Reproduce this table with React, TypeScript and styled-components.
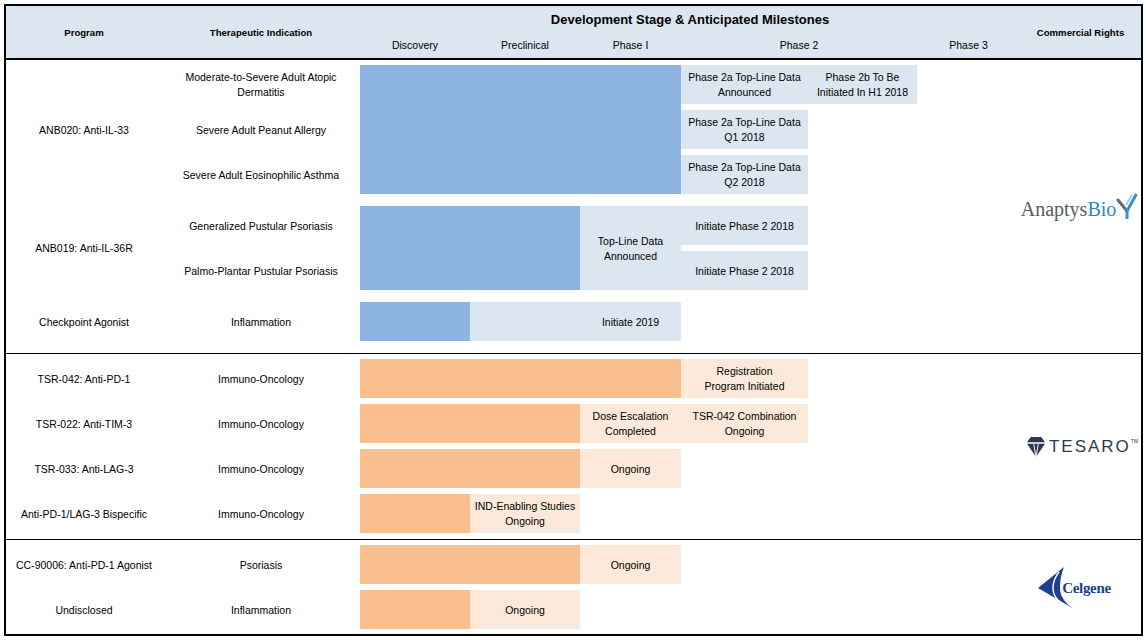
import { FC } from 'react';
import styled, { createGlobalStyle } from 'styled-components';

type Tone = 'blue' | 'orange';
type Fill = 'solid' | 'light';
type LogoKind = 'anaptys' | 'tesaro' | 'celgene';

interface Bar {
  col: string;
  row?: string;
  fill: Fill;
  text?: string;
}

interface Program {
  name: string;
  indications: string[];
  bars: Bar[];
}

interface Section {
  tone: Tone;
  logo: LogoKind;
  gap: number;
  padTop: number;
  padBottom: number;
  programs: Program[];
}

// grid columns: program | indication | discovery | preclinical | phase I | phase 2a | phase 2b | phase 3
const COLUMNS = '156px 198px 110px 110px 101px 127px 109px 103px';

const COLORS: Record<Tone, Record<Fill, string>> = {
  blue: { solid: '#8db4e2', light: '#dce6f1' },
  orange: { solid: '#fabf8f', light: '#fde9d9' },
};

const sections: Section[] = [
  {
    tone: 'blue',
    logo: 'anaptys',
    gap: 12,
    padTop: 5,
    padBottom: 12,
    programs: [
      {
        name: 'ANB020: Anti-IL-33',
        indications: [
          'Moderate-to-Severe Adult Atopic\nDermatitis',
          'Severe Adult Peanut Allergy',
          'Severe Adult Eosinophilic Asthma',
        ],
        bars: [
          { col: '3 / 6', row: '1 / 4', fill: 'solid' },
          { col: '6', row: '1', fill: 'light', text: 'Phase 2a Top-Line Data\nAnnounced' },
          { col: '7', row: '1', fill: 'light', text: 'Phase 2b To Be\nInitiated In H1 2018' },
          { col: '6', row: '2', fill: 'light', text: 'Phase 2a Top-Line Data\nQ1 2018' },
          { col: '6', row: '3', fill: 'light', text: 'Phase 2a Top-Line Data\nQ2 2018' },
        ],
      },
      {
        name: 'ANB019: Anti-IL-36R',
        indications: ['Generalized Pustular Psoriasis', 'Palmo-Plantar Pustular Psoriasis'],
        bars: [
          { col: '3 / 5', row: '1 / 3', fill: 'solid' },
          { col: '5', row: '1 / 3', fill: 'light', text: 'Top-Line Data\nAnnounced' },
          { col: '6', row: '1', fill: 'light', text: 'Initiate Phase 2 2018' },
          { col: '6', row: '2', fill: 'light', text: 'Initiate Phase 2 2018' },
        ],
      },
      {
        name: 'Checkpoint Agonist',
        indications: ['Inflammation'],
        bars: [
          { col: '3', fill: 'solid' },
          { col: '4', fill: 'light' },
          { col: '5', fill: 'light', text: 'Initiate 2019' },
        ],
      },
    ],
  },
  {
    tone: 'orange',
    logo: 'tesaro',
    gap: 6,
    padTop: 5,
    padBottom: 6,
    programs: [
      {
        name: 'TSR-042: Anti-PD-1',
        indications: ['Immuno-Oncology'],
        bars: [
          { col: '3 / 6', fill: 'solid' },
          { col: '6', fill: 'light', text: 'Registration\nProgram Initiated' },
        ],
      },
      {
        name: 'TSR-022: Anti-TIM-3',
        indications: ['Immuno-Oncology'],
        bars: [
          { col: '3 / 5', fill: 'solid' },
          { col: '5', fill: 'light', text: 'Dose Escalation\nCompleted' },
          { col: '6', fill: 'light', text: 'TSR-042 Combination\nOngoing' },
        ],
      },
      {
        name: 'TSR-033: Anti-LAG-3',
        indications: ['Immuno-Oncology'],
        bars: [
          { col: '3 / 5', fill: 'solid' },
          { col: '5', fill: 'light', text: 'Ongoing' },
        ],
      },
      {
        name: 'Anti-PD-1/LAG-3 Bispecific',
        indications: ['Immuno-Oncology'],
        bars: [
          { col: '3', fill: 'solid' },
          { col: '4', fill: 'light', text: 'IND-Enabling Studies\nOngoing' },
        ],
      },
    ],
  },
  {
    tone: 'orange',
    logo: 'celgene',
    gap: 6,
    padTop: 5,
    padBottom: 5,
    programs: [
      {
        name: 'CC-90006: Anti-PD-1 Agonist',
        indications: ['Psoriasis'],
        bars: [
          { col: '3 / 5', fill: 'solid' },
          { col: '5', fill: 'light', text: 'Ongoing' },
        ],
      },
      {
        name: 'Undisclosed',
        indications: ['Inflammation'],
        bars: [
          { col: '3', fill: 'solid' },
          { col: '4', fill: 'light', text: 'Ongoing' },
        ],
      },
    ],
  },
];

const GlobalStyle = createGlobalStyle`
  body {
    margin: 0;
    background: #fff;
    font-family: "Liberation Sans", Arial, sans-serif;
    font-size: 10.5px;
    color: #000;
  }
`;

const Frame = styled.div`
  margin: 4px 0 0 4px;
  width: 1139px;
  border: 2px solid #000;
  box-sizing: border-box;
  background: #fff;
`;

const Header = styled.div`
  display: grid;
  grid-template-columns: ${COLUMNS} 121px;
  grid-template-rows: 26px 26px;
  background: #dce6f1;
  border-bottom: 2px solid #000;
`;

const HeadCell = styled.div<{ $col: string; $row: string; $bold?: boolean; $size?: number }>`
  grid-column: ${(p) => p.$col};
  grid-row: ${(p) => p.$row};
  display: flex;
  align-items: center;
  justify-content: center;
  font-weight: ${(p) => (p.$bold ? 700 : 400)};
  font-size: ${(p) => p.$size ?? 10.5}px;
  white-space: nowrap;
`;

const SectionRow = styled.div<{ $first: boolean }>`
  display: flex;
  border-top: ${(p) => (p.$first ? 'none' : '1px solid #000')};
`;

const Programs = styled.div<{ $gap: number; $padTop: number; $padBottom: number }>`
  width: 1014px;
  display: flex;
  flex-direction: column;
  gap: ${(p) => p.$gap}px;
  padding: ${(p) => p.$padTop}px 0 ${(p) => p.$padBottom}px;
`;

const ProgramGrid = styled.div<{ $rows: number }>`
  display: grid;
  grid-template-columns: ${COLUMNS};
  grid-template-rows: repeat(${(p) => p.$rows}, 39px);
  row-gap: 6px;
`;

const TextCell = styled.div<{ $col: number; $row: string }>`
  grid-column: ${(p) => p.$col};
  grid-row: ${(p) => p.$row};
  display: flex;
  align-items: center;
  justify-content: center;
  text-align: center;
  white-space: pre-line;
  line-height: 15px;
  padding-top: 1px;
`;

const BarCell = styled.div<{ $col: string; $row: string; $color: string }>`
  grid-column: ${(p) => p.$col};
  grid-row: ${(p) => p.$row};
  background: ${(p) => p.$color};
  display: flex;
  align-items: center;
  justify-content: center;
  text-align: center;
  white-space: pre-line;
  line-height: 15px;
  padding-top: 1px;
`;

const LogoCell = styled.div`
  flex: 1;
  display: flex;
  align-items: center;
  justify-content: center;
`;

const AnaptysMark = styled.div`
  display: flex;
  align-items: flex-end;
  margin-left: -2px;
`;

const AnaptysText = styled.span`
  font-family: "Liberation Serif", "Times New Roman", serif;
  font-size: 20px;
  color: #595b5e;
  line-height: 1;
  padding-bottom: 3px;
`;

const BioText = styled.span`
  color: #3382c4;
`;

const TesaroMark = styled.div`
  display: flex;
  align-items: center;
  gap: 4px;
  color: #2d3a4e;
  margin-left: 4px;
`;

const TesaroText = styled.span`
  font-family: "Liberation Sans", Arial, sans-serif;
  font-size: 17px;
  letter-spacing: 2px;
  line-height: 1;
`;

const Trademark = styled.sup`
  font-size: 5px;
  letter-spacing: 0;
  vertical-align: 9px;
`;

const CelgeneMark = styled.div`
  display: flex;
  align-items: center;
  margin-left: -12px;
  margin-top: 2px;
`;

const CelgeneText = styled.span`
  font-family: "Liberation Serif", "Times New Roman", serif;
  font-size: 15px;
  font-weight: 700;
  color: #1d3f8e;
  margin-left: -14px;
  letter-spacing: -0.3px;
`;

const Logo: FC<{ kind: LogoKind }> = ({ kind }) => {
  if (kind === 'anaptys') {
    return (
      <AnaptysMark>
        <AnaptysText>
          Anaptys<BioText>Bio</BioText>
        </AnaptysText>
        <svg width="22" height="30" viewBox="0 0 22 30">
          <path d="M2 8 L11 19" stroke="#5d6d78" strokeWidth="3" strokeLinecap="round" fill="none" />
          <path d="M20.5 2 L11 19 L11 27" stroke="#3a8fcb" strokeWidth="3" strokeLinejoin="round" fill="none" />
          <path d="M16 3 L10 13" stroke="#8fcdef" strokeWidth="1.6" fill="none" />
        </svg>
      </AnaptysMark>
    );
  }
  if (kind === 'tesaro') {
    return (
      <TesaroMark>
        <svg width="18" height="20" viewBox="0 0 17 19">
          <polygon points="3.5,0 13.5,0 17,5 0,5" fill="#2d3a4e" />
          <polygon points="0,6.5 17,6.5 8.5,19" fill="#2d3a4e" />
          <path d="M6.3 6.5 L8.5 19 M10.7 6.5 L8.5 19" stroke="#fff" strokeWidth="0.9" />
        </svg>
        <TesaroText>
          TESARO<Trademark>TM</Trademark>
        </TesaroText>
      </TesaroMark>
    );
  }
  return (
    <CelgeneMark>
      <svg width="38" height="42" viewBox="0 0 38 42">
        <path d="M26 0 L0 21 L36 42 C28 37 22 30 22 21 C22 12 24 5 26 0 Z" fill="#1d3f8e" />
        <path d="M21 5 C17 10 15 15 15 21 C15 29 20 35 29 39" stroke="#fff" strokeWidth="1.4" fill="none" />
      </svg>
      <CelgeneText>Celgene</CelgeneText>
    </CelgeneMark>
  );
};

const ProgramBlock: FC<{ program: Program; tone: Tone }> = ({ program, tone }) => (
  <ProgramGrid $rows={program.indications.length}>
    <TextCell $col={1} $row="1 / -1">
      {program.name}
    </TextCell>
    {program.indications.map((ind, i) => (
      <TextCell key={ind} $col={2} $row={String(i + 1)}>
        {ind}
      </TextCell>
    ))}
    {program.bars.map((bar, i) => (
      <BarCell key={i} $col={bar.col} $row={bar.row ?? '1'} $color={COLORS[tone][bar.fill]}>
        {bar.text}
      </BarCell>
    ))}
  </ProgramGrid>
);

const App: FC = () => {
  return (
    <>
      <GlobalStyle />
      <Frame>
        <Header>
          <HeadCell $col="1" $row="1 / 3" $bold $size={9.6}>Program</HeadCell>
          <HeadCell $col="2" $row="1 / 3" $bold $size={9.6}>Therapeutic Indication</HeadCell>
          <HeadCell $col="3 / 9" $row="1" $bold $size={13}>Development Stage &amp; Anticipated Milestones</HeadCell>
          <HeadCell $col="3" $row="2">Discovery</HeadCell>
          <HeadCell $col="4" $row="2">Preclinical</HeadCell>
          <HeadCell $col="5" $row="2">Phase I</HeadCell>
          <HeadCell $col="6 / 8" $row="2">Phase 2</HeadCell>
          <HeadCell $col="8" $row="2">Phase 3</HeadCell>
          <HeadCell $col="9" $row="1 / 3" $bold $size={9.6}>Commercial Rights</HeadCell>
        </Header>
        {sections.map((section, si) => (
          <SectionRow key={section.logo} $first={si === 0}>
            <Programs $gap={section.gap} $padTop={section.padTop} $padBottom={section.padBottom}>
              {section.programs.map((p) => (
                <ProgramBlock key={p.name} program={p} tone={section.tone} />
              ))}
            </Programs>
            <LogoCell>
              <Logo kind={section.logo} />
            </LogoCell>
          </SectionRow>
        ))}
      </Frame>
    </>
  );
};

export default App;
